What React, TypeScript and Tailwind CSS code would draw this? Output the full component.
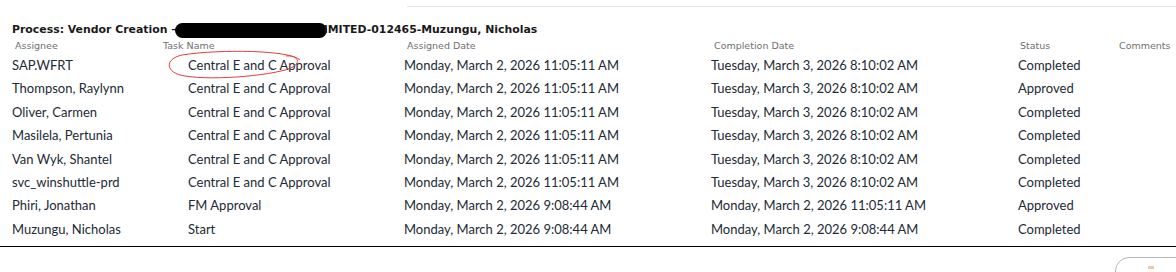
import React from "react"

type Row = {
  assignee: string
  task: string
  assigned: string
  completed: string
  status: string
}

const rows: Row[] = [
  { assignee: "SAP.WFRT", task: "Central E and C Approval", assigned: "Monday, March 2, 2026 11:05:11 AM", completed: "Tuesday, March 3, 2026 8:10:02 AM", status: "Completed" },
  { assignee: "Thompson, Raylynn", task: "Central E and C Approval", assigned: "Monday, March 2, 2026 11:05:11 AM", completed: "Tuesday, March 3, 2026 8:10:02 AM", status: "Approved" },
  { assignee: "Oliver, Carmen", task: "Central E and C Approval", assigned: "Monday, March 2, 2026 11:05:11 AM", completed: "Tuesday, March 3, 2026 8:10:02 AM", status: "Completed" },
  { assignee: "Masilela, Pertunia", task: "Central E and C Approval", assigned: "Monday, March 2, 2026 11:05:11 AM", completed: "Tuesday, March 3, 2026 8:10:02 AM", status: "Completed" },
  { assignee: "Van Wyk, Shantel", task: "Central E and C Approval", assigned: "Monday, March 2, 2026 11:05:11 AM", completed: "Tuesday, March 3, 2026 8:10:02 AM", status: "Completed" },
  { assignee: "svc_winshuttle-prd", task: "Central E and C Approval", assigned: "Monday, March 2, 2026 11:05:11 AM", completed: "Tuesday, March 3, 2026 8:10:02 AM", status: "Completed" },
  { assignee: "Phiri, Jonathan", task: "FM Approval", assigned: "Monday, March 2, 2026 9:08:44 AM", completed: "Monday, March 2, 2026 11:05:11 AM", status: "Approved" },
  { assignee: "Muzungu, Nicholas", task: "Start", assigned: "Monday, March 2, 2026 9:08:44 AM", completed: "Monday, March 2, 2026 9:08:44 AM", status: "Completed" },
]

const cols = "grid grid-cols-[176px_216px_307px_307px_98px_1fr]"

export default function App() {
  return (
    <div className="relative w-[1176px] h-[272px] overflow-hidden bg-white">
      {/* top divider */}
      <div className="mt-[6px] ml-[407px] border-t border-[#e6e6e6]" />

      {/* Title */}
      <div className="mt-[15px] pl-[12px] h-[16px] flex items-center whitespace-nowrap text-[10.9px] font-bold text-[#1a1a1a] [font-family:'DejaVu_Sans',Verdana,sans-serif]">
        <span>Process: Vendor Creation –</span>
        <span className="inline-block w-[152px] h-[15px] -ml-[2px] -mr-[3px] rounded-full bg-black" />
        <span>IMITED-012465-Muzungu, Nicholas</span>
      </div>

      {/* Table */}
      <div className="pl-[12px]">
        <div className={`${cols} h-[16px] items-center text-[9.5px] text-[#707070] [font-family:'DejaVu_Sans',Verdana,sans-serif]`}>
          <span className="pl-[3px]">Assignee</span>
          <span className="-ml-[25px]">Task Name</span>
          <span className="pl-[3px]">Assigned Date</span>
          <span className="pl-[3px]">Completion Date</span>
          <span className="pl-[2px]">Status</span>
          <span className="pl-[3px]">Comments</span>
        </div>
        <div className="text-[13px] text-[#222a35] [font-family:Lato,'Noto_Sans',sans-serif]">
          {rows.map((r, i) => (
            <div key={i} className={`${cols} h-[23.4px] items-center whitespace-nowrap`}>
              <span>{r.assignee}</span>
              <span>{r.task}</span>
              <span>{r.assigned}</span>
              <span>{r.completed}</span>
              <span>{r.status}</span>
              <span />
            </div>
          ))}
        </div>
      </div>

      <div className="mt-[5px] border-t border-black" />

      {/* partial button, cut off at the right edge */}
      <div className="flex justify-end mt-[10px] -mr-[30px]">
        <div className="w-[91px] h-[30px] rounded-[14px] border border-[#b5b5b5] bg-white flex justify-center pt-[8px]">
          <span className="block w-[6px] h-[3px] bg-[#f0c8a8] -ml-[20px]" />
        </div>
      </div>

      {/* hand-drawn red circle annotation */}
      <svg className="absolute left-0 top-0 pointer-events-none" width="1176" height="272">
        <path
          d="M 300 60 C 290 50, 220 49, 182 55 C 164 59, 165 73, 185 76 C 215 81, 278 75, 293 67 C 302 61, 296 55, 286 56"
          fill="none"
          stroke="#e0403a"
          strokeWidth="1"
        />
      </svg>
    </div>
  )
}
